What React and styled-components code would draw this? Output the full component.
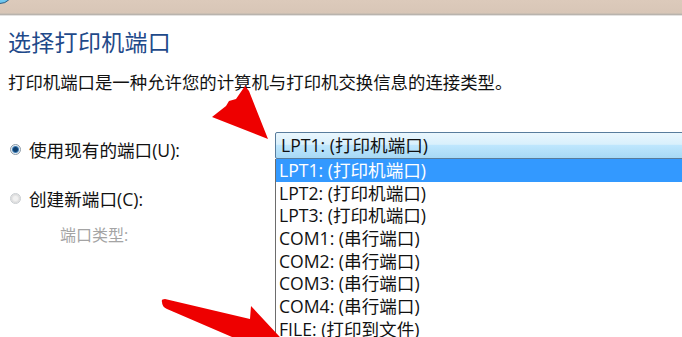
import React from "react";
import styled, { createGlobalStyle } from "styled-components";

const GlobalStyle = createGlobalStyle`
    html, body {
        margin: 0;
        padding: 0;
        background: #fff;
    }
    body {
        font-family: "Open Sans", "Noto Sans CJK SC", sans-serif;
    }
`;

const Page = styled.div`
    position: relative;
    width: 682px;
    height: 337px;
    overflow: hidden;
    background: #fff;
    color: #111;
`;

const TitleBar = styled.div`
    height: 13px;
    background: linear-gradient(#dccabb, #d8c6b7);
    border-bottom: 1px solid #cbbfb3;
    box-shadow: 0 1px 0 #b9b3ad, 0 2px 0 #e4e2e0;
    display: flex;
    align-items: flex-end;
`;

const BackButton = styled.div`
    width: 26px;
    height: 26px;
    margin-left: -13px;
    margin-bottom: 9px;
    border-radius: 50%;
    border: 1px solid #2c5f86;
    background: radial-gradient(circle at 60% 80%, #7fd3f5, #2f8fd0 70%);
    box-sizing: border-box;
`;

const Content = styled.div`
    padding: 13px 0 0 8px;
`;

const Heading = styled.h1`
    margin: 0;
    font-size: 23px;
    font-weight: 400;
    line-height: 30px;
    color: #1f4a8a;
    letter-spacing: 0.3px;
`;

const Description = styled.p`
    margin: 13px 0 0;
    font-size: 17.4px;
    line-height: 24px;
`;

const Form = styled.div`
    display: grid;
    grid-template-columns: 267px 430px;
    margin-top: 38px;
`;

const Options = styled.div`
    display: flex;
    flex-direction: column;
`;

const Option = styled.label`
    display: flex;
    align-items: center;
    gap: 8px;
    height: 24px;
    margin-top: ${props => props.offset}px;
    padding-left: 2px;
    font-size: 17.6px;
    color: #111;
`;

const Radio = styled.span`
    width: 11px;
    height: 11px;
    border-radius: 50%;
    box-sizing: border-box;
    border: 1px solid ${props => (props.checked ? "#8c9aa6" : "#c9cdd1")};
    background: ${props =>
        props.checked
            ? "radial-gradient(circle, #0f3f6e 0 2px, #3f7fb8 3px, #e8eef3 4px)"
            : "radial-gradient(circle, #f1f1f1 0 2px, #dcdcdc 4px, #f4f4f4 5px)"};
`;

const SubLabel = styled.div`
    margin: 13px 0 0 52px;
    font-size: 16px;
    line-height: 24px;
    color: #a4a4a4;
`;

const ComboWrap = styled.div`
    position: relative;
    height: 27px;
`;

const Combo = styled.div`
    height: 27px;
    box-sizing: border-box;
    border: 1px solid #587c9c;
    border-radius: 2px;
    padding-left: 5px;
    font-size: 17.6px;
    line-height: 24px;
    color: #111;
    background: linear-gradient(#eaf6fd 0%, #d9f0fc 45%, #bee6fd 50%, #a7d9f5 100%);
`;

const Dropdown = styled.ul`
    position: absolute;
    top: 27px;
    left: 0;
    width: 100%;
    margin: 0;
    padding: 0;
    list-style: none;
    background: #fff;
    border-left: 1px solid #6d6d6d;
`;

const Item = styled.li`
    height: 22.7px;
    line-height: 22px;
    padding-left: 3px;
    font-size: 17.6px;
    white-space: nowrap;
    color: ${props => (props.selected ? "#fff" : "#111")};
    background: ${props => (props.selected ? "#3399ff" : "transparent")};
`;

const Annotations = styled.svg`
    position: absolute;
    left: 0;
    top: 0;
    pointer-events: none;
`;

const ports = [
    "LPT1: (打印机端口)",
    "LPT2: (打印机端口)",
    "LPT3: (打印机端口)",
    "COM1: (串行端口)",
    "COM2: (串行端口)",
    "COM3: (串行端口)",
    "COM4: (串行端口)",
    "FILE: (打印到文件)"
];

export default function App() {
    return (
        <Page>
            <GlobalStyle />
            <TitleBar>
                <BackButton />
            </TitleBar>
            <Content>
                <Heading>选择打印机端口</Heading>
                <Description>
                    打印机端口是一种允许您的计算机与打印机交换信息的连接类型。
                </Description>
                <Form>
                    <Options>
                        <Option offset={5}>
                            <Radio checked />
                            使用现有的端口(U):
                        </Option>
                        <Option offset={25}>
                            <Radio />
                            创建新端口(C):
                        </Option>
                        <SubLabel>端口类型:</SubLabel>
                    </Options>
                    <ComboWrap>
                        <Combo>LPT1: (打印机端口)</Combo>
                        <Dropdown>
                            {ports.map((p, i) => (
                                <Item key={p} selected={i === 0}>
                                    {p}
                                </Item>
                            ))}
                        </Dropdown>
                    </ComboWrap>
                </Form>
            </Content>
            <Annotations width="682" height="337" viewBox="0 0 682 337">
                <polygon
                    points="245,86 249,91 268,139 212,117 226,106 229,101 236,99"
                    fill="#ee0000"
                />
                <path
                    d="M162,302 Q161,299 165,299 L250,319 L251,306 L292,350 L224,350 L232,337 L167,309 Q162,307 162,302 Z"
                    fill="#ee0000"
                />
            </Annotations>
        </Page>
    );
}
